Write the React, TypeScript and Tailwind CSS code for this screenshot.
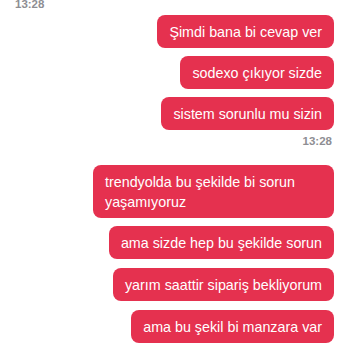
import React from "react";

type Item =
  | { kind: "time"; text: string; align: "left" | "right"; cls: string }
  | { kind: "msg"; text: string; cls: string };

const items: Item[] = [
  { kind: "time", text: "13:28", align: "left", cls: "mt-[-3px]" },
  { kind: "msg", text: "Şimdi bana bi cevap ver", cls: "mt-[4px]" },
  { kind: "msg", text: "sodexo çıkıyor sizde", cls: "mt-[8px]" },
  { kind: "msg", text: "sistem sorunlu mu sizin", cls: "mt-[8px]" },
  { kind: "time", text: "13:28", align: "right", cls: "mt-[4px]" },
  { kind: "msg", text: "trendyolda bu şekilde bi sorun yaşamıyoruz", cls: "mt-[17px]" },
  { kind: "msg", text: "ama sizde hep bu şekilde sorun", cls: "mt-[8px]" },
  { kind: "msg", text: "yarım saattir sipariş bekliyorum", cls: "mt-[9px]" },
  { kind: "msg", text: "ama bu şekil bi manzara var", cls: "mt-[9px]" },
  { kind: "time", text: "13:29", align: "right", cls: "mt-[5px]" },
];

export default function App() {
  return (
    <div
      className="w-[350px] h-[350px] overflow-hidden bg-white flex flex-col pl-[15px] pr-[16px]"
      style={{ fontFamily: "'Liberation Sans', Arial, sans-serif" }}
    >
      {items.map((it, i) =>
        it.kind === "time" ? (
          <div
            key={i}
            className={`${it.cls} text-[11.5px] leading-[14px] font-semibold text-[#8e8e93] ${
              it.align === "left" ? "self-start" : "self-end pr-[2px]"
            }`}
          >
            {it.text}
          </div>
        ) : (
          <div
            key={i}
            className={`${it.cls} self-end max-w-[241px] bg-[#e5314f] text-white text-[14.3px] leading-[20px] rounded-[8px] px-[12px] pt-[7px] pb-[6px]`}
          >
            {it.text}
          </div>
        )
      )}
    </div>
  );
}
